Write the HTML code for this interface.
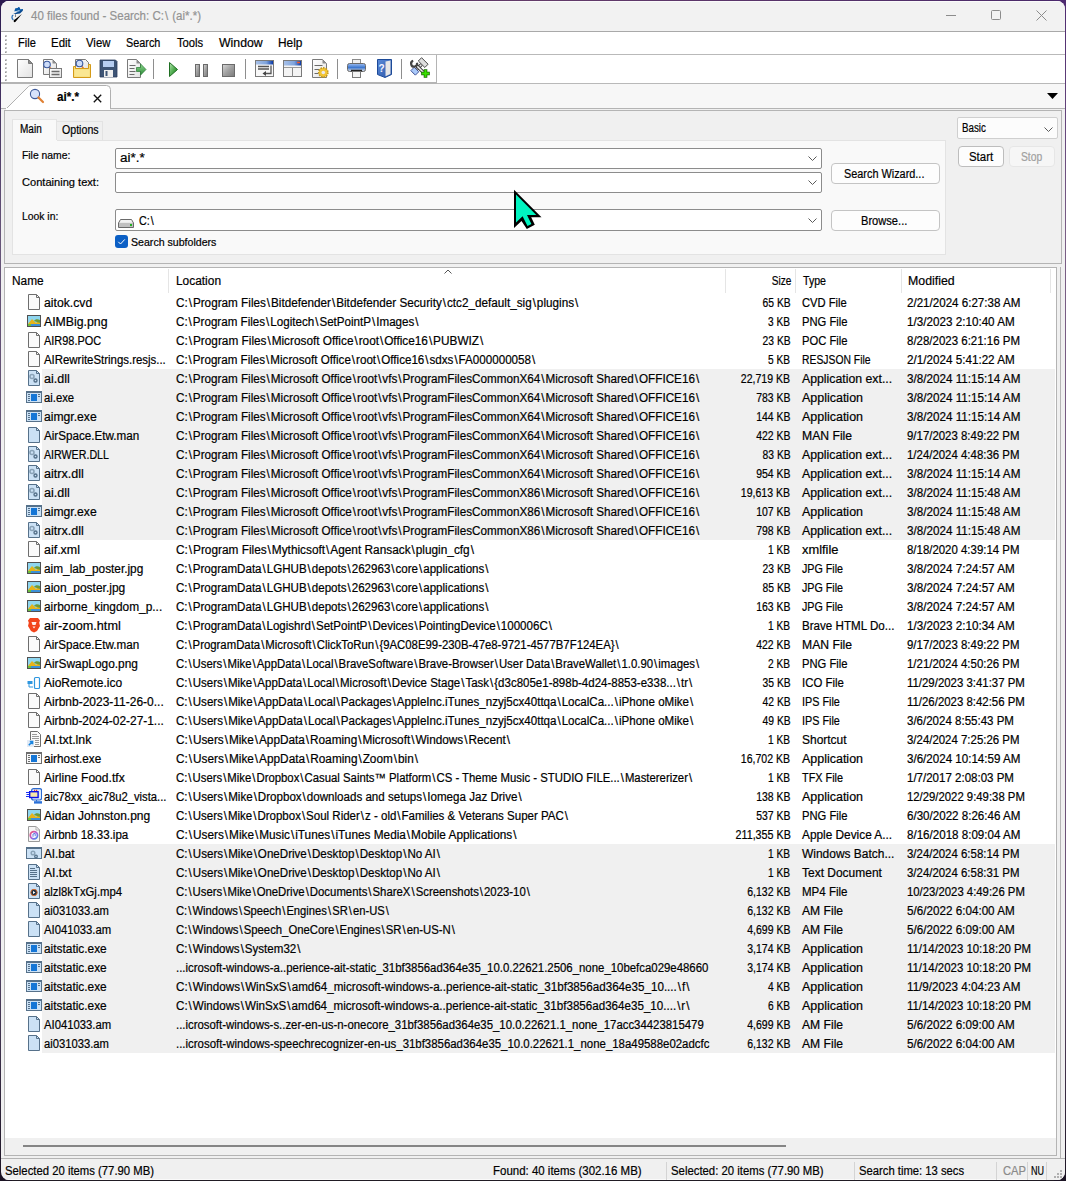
<!DOCTYPE html>
<html><head><meta charset="utf-8"><style>
*{box-sizing:border-box}
html,body{margin:0;padding:0}
body{width:1066px;height:1181px;overflow:hidden;position:relative;background:#6a577a;font-family:"Liberation Sans",sans-serif;font-size:12px;color:#000}
.a{position:absolute}
.t{position:absolute;white-space:nowrap;transform-origin:0 0;line-height:19px;-webkit-text-stroke:0.2px currentColor}
.tr{transform-origin:100% 0}
.t i{font-style:normal;display:inline-block;text-align:center}
#win{position:absolute;left:1px;top:1px;width:1064px;height:1179px;border-radius:8px;background:#f0f0f0;overflow:hidden}
.hl{position:absolute;height:1px;background:#b4b4b4}
.vl{position:absolute;width:1px;background:#b4b4b4}
.row{position:absolute;left:0;width:1056px;height:19px}
.sel{position:absolute;left:41px;width:1013px;height:19px;background:#f0f0f0}
.ic{position:absolute;left:25px;width:16px;height:16px}
.ic svg,.a>svg{display:block}
.btn{position:absolute;border:1px solid #c4c4c4;border-radius:4px;background:#fdfdfd;text-align:center;line-height:18px}
.inp{position:absolute;border:1px solid #8c8c8c;border-radius:2px;background:#fff}
.chev{position:absolute;width:12px;height:8px}
</style></head><body>
<div class="a" style="left:0;top:0;width:1066px;height:1px;background:linear-gradient(to right,#2b1a50,#643c6a 50%,#4a2a6a)"></div>
<div class="a" style="left:0;top:0;width:12px;height:12px;background:#2b1a50"></div>
<div class="a" style="left:1054px;top:0;width:12px;height:12px;background:#4e2a70"></div>
<div class="a" style="left:0;top:0;width:1px;height:1181px;background:linear-gradient(#2b1a50,#665478 20%,#554668 80%,#1c1424)"></div>
<div class="a" style="left:1065px;top:0;width:1px;height:1181px;background:linear-gradient(#4e2a70,#7a5e85 20%,#6a5075 80%,#1c1424)"></div>
<div class="a" style="left:0;top:1180px;width:1066px;height:1px;background:#211c24"></div>
<div class="a" style="left:0;top:1169px;width:12px;height:12px;background:#1c1424"></div>
<div class="a" style="left:1054px;top:1169px;width:12px;height:12px;background:#1c1424"></div>
<div id="win">

<div class="a" style="left:0;top:0;width:1064px;height:30px;background:#f2f2f2;border-top:1px solid #fbfbfb"></div>
<div class="hl" style="left:0;top:30px;width:1064px;background:#a9a9a9"></div>
<svg class="a" style="left:5px;top:3px" width="24" height="24" viewBox="0 0 24 24">
<path d="M8.3 7.2L9.3 4.3L11.6 3.9L12.4 2.9L13.8 3.4L14.2 5.2L16.9 5.1L17 6.3L14.3 7.6L11 8.2Z" fill="#0a5aa6"/>
<path d="M7.2 9.8L10.5 8.6L14.2 7.1L16.8 5.6L16.6 7.1L14 9.6L10.3 10Z" fill="#0a4a90"/>
<path d="M8.8 7.9L13.5 6.6" stroke="#fff" stroke-width=".8"/>
<path d="M7.3 11C5.6 11.8 5.4 14.6 7.4 15.9" fill="none" stroke="#2a70b8" stroke-width="1.3"/>
<path d="M9.5 10.2V13" stroke="#555" stroke-width=".7"/>
<path d="M7.7 17.6C7.4 16.2 8.3 15.5 9.6 14.9L15.9 10.1L10.2 17C9.7 18.3 8.3 18.5 7.7 17.6Z" fill="#000"/>
</svg>
<div class="t" style="top:6px;transform:scaleX(0.9578);color:#939393;left:30.00px;">40 files found - Search: C:<i style="width:5.41px">\</i> (ai*.*)</div>
<div class="a" style="left:945px;top:14px;width:10px;height:1px;background:#8c8c8c"></div>
<div class="a" style="left:990px;top:9px;width:10px;height:10px;border:1px solid #8c8c8c;border-radius:1.5px"></div>
<svg class="a" style="left:1035px;top:9px" width="11" height="11"><path d="M.5 .5l10 10M10.5 .5l-10 10" stroke="#8c8c8c" stroke-width="1"/></svg>
<div class="a" style="left:0;top:31px;width:1064px;height:22px;background:#fff"></div>
<div class="hl" style="left:0;top:53px;width:1064px;background:#b9b9b9"></div>
<div class="a" style="left:4px;top:34px;width:2px;height:2px;background:#c4c4c4"></div><div class="a" style="left:4px;top:35px;width:1px;height:1px;background:#9a9a9a"></div>
<div class="a" style="left:4px;top:38px;width:2px;height:2px;background:#c4c4c4"></div><div class="a" style="left:4px;top:39px;width:1px;height:1px;background:#9a9a9a"></div>
<div class="a" style="left:4px;top:42px;width:2px;height:2px;background:#c4c4c4"></div><div class="a" style="left:4px;top:43px;width:1px;height:1px;background:#9a9a9a"></div>
<div class="a" style="left:4px;top:46px;width:2px;height:2px;background:#c4c4c4"></div><div class="a" style="left:4px;top:47px;width:1px;height:1px;background:#9a9a9a"></div>
<div class="a" style="left:4px;top:50px;width:2px;height:2px;background:#c4c4c4"></div><div class="a" style="left:4px;top:51px;width:1px;height:1px;background:#9a9a9a"></div>
<div class="t" style="top:33px;transform:scaleX(0.9206);left:17.20px;">File</div>
<div class="t" style="top:33px;transform:scaleX(0.9527);left:50.20px;">Edit</div>
<div class="t" style="top:33px;transform:scaleX(0.9460);left:85.30px;">View</div>
<div class="t" style="top:33px;transform:scaleX(0.9047);left:125.20px;">Search</div>
<div class="t" style="top:33px;transform:scaleX(0.9353);left:175.70px;">Tools</div>
<div class="t" style="top:33px;transform:scaleX(1.0239);left:217.90px;">Window</div>
<div class="t" style="top:33px;transform:scaleX(0.9887);left:277.30px;">Help</div>
<div class="a" style="left:0;top:54px;width:1064px;height:28px;background:#fff"></div>
<div class="a" style="left:0;top:81px;width:436px;height:2px;background:#b4b4b4"></div>
<div class="hl" style="left:436px;top:82px;width:628px;background:#b9b9b9"></div>
<div class="vl" style="left:435px;top:54px;height:28px;background:#b4b4b4"></div>
<div class="a" style="left:4px;top:58px;width:2px;height:2px;background:#c4c4c4"></div><div class="a" style="left:4px;top:59px;width:1px;height:1px;background:#9a9a9a"></div>
<div class="a" style="left:4px;top:62px;width:2px;height:2px;background:#c4c4c4"></div><div class="a" style="left:4px;top:63px;width:1px;height:1px;background:#9a9a9a"></div>
<div class="a" style="left:4px;top:66px;width:2px;height:2px;background:#c4c4c4"></div><div class="a" style="left:4px;top:67px;width:1px;height:1px;background:#9a9a9a"></div>
<div class="a" style="left:4px;top:70px;width:2px;height:2px;background:#c4c4c4"></div><div class="a" style="left:4px;top:71px;width:1px;height:1px;background:#9a9a9a"></div>
<div class="a" style="left:4px;top:74px;width:2px;height:2px;background:#c4c4c4"></div><div class="a" style="left:4px;top:75px;width:1px;height:1px;background:#9a9a9a"></div>
<div class="a" style="left:4px;top:78px;width:2px;height:2px;background:#c4c4c4"></div><div class="a" style="left:4px;top:79px;width:1px;height:1px;background:#9a9a9a"></div>
<div class="vl" style="left:152px;top:58px;height:20px;background:#8a8a8a"></div>
<div class="vl" style="left:244px;top:58px;height:20px;background:#8a8a8a"></div>
<div class="vl" style="left:336px;top:58px;height:20px;background:#8a8a8a"></div>
<div class="vl" style="left:400px;top:58px;height:20px;background:#8a8a8a"></div>
<svg class="a" style="left:-1px;top:-1px" width="440" height="84" viewBox="0 0 440 84">
<defs>
<linearGradient id="gdoc" x1="0" y1="0" x2="1" y2="1"><stop offset="0" stop-color="#ffffff"/><stop offset="1" stop-color="#e2e2e2"/></linearGradient>
<linearGradient id="ggreen" x1="0" y1="0" x2="1" y2="1"><stop offset="0" stop-color="#b6e8b0"/><stop offset=".55" stop-color="#4aa84a"/><stop offset="1" stop-color="#1f7a22"/></linearGradient>
<linearGradient id="ggray" x1="0" y1="0" x2="1" y2="1"><stop offset="0" stop-color="#d8d8d8"/><stop offset=".5" stop-color="#a0a0a0"/><stop offset="1" stop-color="#7a7a7a"/></linearGradient>
<linearGradient id="gblue" x1="0" y1="0" x2="1" y2="0"><stop offset="0" stop-color="#a7c0e8"/><stop offset=".6" stop-color="#7fa4dc"/><stop offset="1" stop-color="#0a3aa8"/></linearGradient>
<linearGradient id="garrow" x1="0" y1="0" x2="0" y2="1"><stop offset="0" stop-color="#8fd88f"/><stop offset="1" stop-color="#2a8a35"/></linearGradient>
<linearGradient id="gprint" x1="0" y1="0" x2="0" y2="1"><stop offset="0" stop-color="#9dbdf0"/><stop offset=".5" stop-color="#3e78d0"/><stop offset="1" stop-color="#e8e8e8"/></linearGradient>
<linearGradient id="gbook" x1="0" y1="0" x2="1" y2="1"><stop offset="0" stop-color="#5a8ad8"/><stop offset="1" stop-color="#2a55a8"/></linearGradient>
</defs>
<!-- new doc -->
<path d="M17.5 59.5H28.5L32.5 63.5V77.5H17.5Z" fill="url(#gdoc)" stroke="#7a7a7a"/>
<path d="M28.5 59.5V63.5H32.5Z" fill="#8c8c8c" stroke="#7a7a7a"/>
<!-- doc search -->
<path d="M43.5 59.5H52.5L56.5 63.5V74.5H43.5Z" fill="url(#gdoc)" stroke="#7a7a7a"/>
<path d="M52.5 59.5V63.5H56.5Z" fill="#8c8c8c"/>
<path d="M48.5 66.5L52 70" stroke="#e07a2a" stroke-width="1.8"/>
<circle cx="47" cy="64.5" r="3.3" fill="#cddcf8" stroke="#3a5aa0" stroke-width="1.1"/>
<rect x="49.5" y="68.5" width="12" height="9" fill="url(#gdoc)" stroke="#7a7a7a"/>
<path d="M51.5 71.5h8M51.5 74.5h8" stroke="#6a6a6a" stroke-width="1.3"/>
<!-- folder search -->
<path d="M75.5 59.5H85.5L88.5 62.5V70H75.5Z" fill="url(#gdoc)" stroke="#7a7a7a"/>
<path d="M80 65L83.5 68" stroke="#e07a2a" stroke-width="1.6"/>
<circle cx="79.5" cy="63.5" r="3.3" fill="#cddcf8" stroke="#3a5aa0" stroke-width="1.1"/>
<path d="M73.5 66.5H75.5V68.5H88.5V64.5H90.5V77.5H73.5Z" fill="#f6dc78" stroke="#d49a18"/>
<path d="M74.5 69.5H89.5V76.5H74.5Z" fill="#fae792"/>
<!-- floppy -->
<path d="M100 60H115.5L117 61.5V77H100Z" fill="#3d5475" stroke="#2c3e5e" stroke-width=".8"/>
<rect x="103" y="61" width="11" height="6" fill="#b6cdf0"/>
<rect x="104" y="70" width="9" height="7" fill="#f0f0f0"/>
<rect x="105.5" y="71" width="2" height="5" fill="#3d5475"/>
<!-- export -->
<path d="M127.5 59.5H136.5L140.5 63.5V77.5H127.5Z" fill="url(#gdoc)" stroke="#7a7a7a"/>
<path d="M136.5 59.5V63.5H140.5Z" fill="#8c8c8c"/>
<path d="M129.5 65.5h6M129.5 68.5h5M129.5 71.5h6M129.5 74.5h5" stroke="#6a6a6a" stroke-width="1.2"/>
<path d="M136.5 67.5H140.5V63.8L146 69.5L140.5 75.2V71.5H136.5Z" fill="url(#garrow)" stroke="#2a7a35" stroke-width=".7"/>
<!-- separators -->
<path d="M153.5 59v20M245.5 59v20M337.5 59v20M401.5 59v20" stroke="#8e8e8e"/>
<!-- play -->
<path d="M169.5 62.5L177.5 69.5L169.5 76.5Z" fill="url(#ggreen)" stroke="#1f6e22" stroke-linejoin="round"/>
<!-- pause -->
<rect x="195.5" y="64.5" width="4" height="12" fill="url(#ggray)" stroke="#6a6a6a"/>
<rect x="203.5" y="64.5" width="4" height="12" fill="url(#ggray)" stroke="#6a6a6a"/>
<!-- stop -->
<rect x="222.5" y="64.5" width="12" height="12" fill="url(#ggray)" stroke="#6a6a6a"/>
<!-- window arrow -->
<rect x="255.5" y="60.5" width="18" height="16" fill="#f8f8f8" stroke="#7a7a7a"/>
<rect x="256" y="61" width="17" height="3.5" fill="url(#gblue)"/>
<path d="M258 66.5h11M258 69h11" stroke="#555" stroke-width="1.3"/>
<path d="M271 65.5V73.5H265" fill="none" stroke="#555" stroke-width="1.3"/>
<path d="M262.5 73.5L266 71V76Z" fill="#444"/>
<!-- window panes -->
<rect x="283.5" y="60.5" width="18" height="16" fill="#f4f4f4" stroke="#7a7a7a"/>
<rect x="284" y="61" width="17" height="4.5" fill="url(#gblue)"/>
<path d="M297 62.5h3" stroke="#f05a28" stroke-width="1.4"/>
<path d="M284 67.5h17" stroke="#9a9a9a"/>
<path d="M292.5 68v9" stroke="#8a8a8a"/>
<!-- doc gear -->
<path d="M312.5 59.5H322.5L326.5 63.5V77.5H312.5Z" fill="url(#gdoc)" stroke="#7a7a7a"/>
<path d="M322.5 59.5V63.5H326.5Z" fill="#8c8c8c"/>
<path d="M314.5 65.5h8M314.5 69.5h5M314.5 73.5h4" stroke="#6a6a6a" stroke-width="1.2"/>
<circle cx="323.3" cy="72.5" r="4.6" fill="#f2c535" stroke="#c89a18" stroke-width="1.6" stroke-dasharray="1.6 1"/>
<circle cx="323.3" cy="72.5" r="3.6" fill="#f2c535"/>
<circle cx="323.3" cy="72.5" r="1.8" fill="#e8e8f0"/>
<!-- printer -->
<rect x="352.5" y="59.5" width="8" height="5" fill="#f0f0f0" stroke="#8a8a8a"/>
<rect x="347.5" y="63.5" width="18" height="8" rx="2" fill="url(#gprint)" stroke="#6a6a6a"/>
<path d="M351 70.5h11" stroke="#222" stroke-width="1.4"/>
<rect x="352.5" y="71.5" width="8" height="6" fill="#f4f4f4" stroke="#7a7a7a"/>
<!-- help book -->
<path d="M377.5 59.5H391.5V74.5L385 77.5L377.5 74.5Z" fill="url(#gbook)" stroke="#1c4a98"/>
<path d="M385.5 61.5L390.5 60.5V74L385.5 76.3Z" fill="#e6e6e6"/>
<text x="378.6" y="72" font-family="Liberation Sans" font-weight="bold" font-size="10" fill="#f4f4ff">?</text>
<!-- tools -->
<path d="M421.5 64.5L413 73" stroke="#333" stroke-width="3.2"/>
<path d="M421.5 64.5L413 73" stroke="#e8e8e8" stroke-width="1.6"/>
<path d="M421.57 57.72 L428.08 64.23 L424.83 67.48 L418.32 60.97Z" fill="#dedede" stroke="#333" stroke-width=".9"/>
<path d="M414.23 67.24 L418.76 71.77 L415.37 75.16 L410.84 70.63Z" fill="#a9c9fa" stroke="#3a4a90" stroke-width=".9"/>
<path d="M416 65L423 72" stroke="#333" stroke-width="3.2"/>
<path d="M416 65L423 72" stroke="#f2f2f2" stroke-width="1.6"/>
<path d="M417 62.8A3 3 0 1 1 413.2 60.8" fill="none" stroke="#444" stroke-width="2.2"/>
<path d="M425.5 69.2v8.6M421.2 73.5h8.6" stroke="#176a00" stroke-width="3.6"/>
<path d="M425.5 70v7M422 73.5h7" stroke="#3ae000" stroke-width="2"/>
</svg>
<div class="a" style="left:0;top:83px;width:1064px;height:24px;background:#f7f7f7"></div>
<div class="hl" style="left:0;top:107px;width:1064px;background:#b4b4b4"></div>
<svg class="a" style="left:0;top:83px" width="115" height="26"><path d="M5 25 L27.5 2.5 Q28.5 1.5 30 1.5 H105.5 Q109.5 1.5 109.5 5.5 V25" fill="#ffffff" stroke="#b0b0b0"/><rect x="5" y="24" width="104" height="2" fill="#fff"/></svg>
<svg class="a" style="left:28px;top:87px" width="16" height="16"><circle cx="6" cy="6" r="4.6" fill="#d7e2fb" stroke="#3e5a9a" stroke-width="1.1"/><path d="M9.5 9.5l4.5 4.5" stroke="#e08033" stroke-width="2.2" stroke-linecap="round"/></svg>
<div class="t" style="top:87px;transform:scaleX(0.9699);font-weight:bold;left:56.00px;">ai*.*</div>
<svg class="a" style="left:92px;top:93px" width="9" height="9"><path d="M.8 .8l7.4 7.4M8.2 .8l-7.4 7.4" stroke="#111" stroke-width="1.35"/></svg>
<svg class="a" style="left:1046px;top:92px" width="11" height="6"><path d="M0 0h11L5.5 6z" fill="#000"/></svg>
<div class="a" style="left:3px;top:109px;width:1058px;height:154px;border:1px solid #b4b4b4;border-top-width:1px;background:#f0f0f0"></div>
<div class="a" style="left:11px;top:118px;width:45px;height:22px;border:1px solid #e3e3e3;border-bottom:none;background:#f9f9f9"></div>
<div class="a" style="left:56px;top:120px;width:46px;height:20px;border:1px solid #e3e3e3;border-bottom:none;border-left:none;background:#f0f0f0"></div>
<div class="t" style="top:119px;transform:scaleX(0.8343);left:18.50px;">Main</div>
<div class="t" style="top:120px;transform:scaleX(0.8850);left:60.60px;">Options</div>
<div class="a" style="left:11px;top:139px;width:934px;height:115px;border:1px solid #e3e3e3;background:#f9f9f9"></div>
<div class="a" style="left:12px;top:139px;width:44px;height:2px;background:#f9f9f9"></div>
<div class="t" style="top:145px;transform:scaleX(0.9406);font-size:11px;left:20.60px;">File name:</div>
<div class="t" style="top:172px;transform:scaleX(1.0074);font-size:11px;left:20.60px;">Containing text:</div>
<div class="t" style="top:206px;transform:scaleX(0.9422);font-size:11px;left:20.50px;">Look in:</div>
<div class="inp" style="left:114px;top:147px;width:707px;height:21px"></div>
<div class="a" style="left:807px;top:155px"><svg width="10" height="6"><path d="M.5 .5L4.5 4.5L8.5 .5" fill="none" stroke="#5a5a5a" stroke-width="1"/></svg></div>
<div class="inp" style="left:114px;top:171px;width:707px;height:21px"></div>
<div class="a" style="left:807px;top:179px"><svg width="10" height="6"><path d="M.5 .5L4.5 4.5L8.5 .5" fill="none" stroke="#5a5a5a" stroke-width="1"/></svg></div>
<div class="inp" style="left:114px;top:208px;width:707px;height:22px"></div>
<div class="a" style="left:807px;top:217px"><svg width="10" height="6"><path d="M.5 .5L4.5 4.5L8.5 .5" fill="none" stroke="#5a5a5a" stroke-width="1"/></svg></div>
<div class="t" style="top:148px;transform:scaleX(1.1220);left:119.40px;">ai*.*</div>
<svg class="a" style="left:117px;top:217px" width="17" height="11"><path d="M2.5 1.5h11l2 3.5v4.5h-15V5z" fill="#cfcfcf" stroke="#6a6a6a"/><path d="M3 2h10l1.6 2.8H1.4z" fill="#f2f2f2"/><rect x="1" y="5" width="14" height="4" fill="#c0c0c0"/><rect x="12" y="6" width="2" height="2" fill="#22b022"/></svg>
<div class="t" style="top:211px;transform:scaleX(0.8929);left:137.50px;">C:<i style="width:5.81px">\</i></div>
<div class="a" style="left:114px;top:234px;width:13px;height:13px;border-radius:3px;background:#0b5fc5"></div>
<svg class="a" style="left:114px;top:234px" width="13" height="13"><path d="M3.3 6.8l2.2 2.2 4.3-4.6" fill="none" stroke="#fff" stroke-width="1"/></svg>
<div class="t" style="top:232px;transform:scaleX(0.9633);font-size:11px;left:129.60px;">Search subfolders</div>
<div class="btn" style="left:830px;top:162px;width:109px;height:21px;"></div>
<div class="t" style="top:164px;transform:scaleX(0.9065);left:843.40px;">Search Wizard...</div>
<div class="btn" style="left:830px;top:209px;width:109px;height:21px;"></div>
<div class="t" style="top:211px;transform:scaleX(0.9257);left:860.30px;">Browse...</div>
<div class="a" style="left:956px;top:116px;width:101px;height:22px;border:1px solid #cfcfcf;border-radius:2px;background:#fcfcfc"></div>
<div class="t" style="top:118px;transform:scaleX(0.8145);left:960.60px;">Basic</div>
<div class="a" style="left:1042.5px;top:125.5px"><svg width="10" height="6"><path d="M.5 .5L4.5 4.5L8.5 .5" fill="none" stroke="#5a5a5a" stroke-width="1"/></svg></div>
<div class="btn" style="left:957px;top:145px;width:46px;height:21px;border-color:#bdbdbd"></div>
<div class="t" style="top:147px;transform:scaleX(0.9509);left:967.70px;">Start</div>
<div class="btn" style="left:1008px;top:145px;width:46px;height:21px;border-color:#e6e6e6;background:#f6f6f6"></div>
<div class="t" style="top:147px;transform:scaleX(0.8588);color:#a0a0a0;left:1019.70px;">Stop</div>
<div class="a" style="left:3px;top:266px;width:1053px;height:889px;border:1px solid #b4b4b4;background:#fff"></div>
<div class="vl" style="left:1059px;top:266px;height:892px;background:#b4b4b4"></div>
<div class="vl" style="left:167px;top:268px;height:24px;background:#e5e5e5"></div>
<div class="vl" style="left:724px;top:268px;height:24px;background:#e5e5e5"></div>
<div class="vl" style="left:794px;top:268px;height:24px;background:#e5e5e5"></div>
<div class="vl" style="left:900px;top:268px;height:24px;background:#e5e5e5"></div>
<div class="vl" style="left:1049px;top:268px;height:24px;background:#e5e5e5"></div>
<svg class="a" style="left:443px;top:268px" width="9" height="6"><path d="M.5 4.5L4 1l3.5 3.5" fill="none" stroke="#555" stroke-width="1"/></svg>
<div class="t" style="top:271px;transform:scaleX(0.9872);left:11.40px;">Name</div>
<div class="t" style="top:271px;transform:scaleX(0.9919);left:174.50px;">Location</div>
<div class="t" style="top:271px;transform:scaleX(0.8396);right:274.02px;transform-origin:100% 0;">Size</div>
<div class="t" style="top:271px;transform:scaleX(0.8841);left:802.00px;">Type</div>
<div class="t" style="top:271px;transform:scaleX(1.0274);left:906.80px;">Modified</div>
<div class="ic" style="top:293px"><svg width="16" height="16"><path d="M2.5 .5h8l3 3v12h-11z" fill="#fafafa" stroke="#6e6e6e"/><path d="M10.5 .5v3h3" fill="none" stroke="#6e6e6e"/></svg></div>
<div class="t" style="top:293px;transform:scaleX(1.0179);left:43.20px;">aitok.cvd</div>
<div class="t" style="top:293px;transform:scaleX(0.9770);left:174.50px;">C:<i style="width:5.31px">\</i>Program Files<i style="width:5.31px">\</i>Bitdefender<i style="width:5.31px">\</i>Bitdefender Security<i style="width:5.31px">\</i>ctc2_default_sig<i style="width:5.31px">\</i>plugins<i style="width:5.31px">\</i></div>
<div class="t" style="top:293px;transform:scaleX(0.8596);right:274.50px;transform-origin:100% 0;">65 KB</div>
<div class="t" style="top:293px;transform:scaleX(0.9316);left:801.40px;">CVD File</div>
<div class="t" style="top:293px;transform:scaleX(0.9655);left:906.30px;">2/21/2024 6:27:38 AM</div>
<div class="ic" style="top:312px"><svg width="16" height="16"><rect x="1.5" y="2.5" width="13" height="11" fill="#8fd6ef" stroke="#505050"/><path d="M2 11l4-5 4 4 2-2 2 2v3H2z" fill="#e7b319"/><path d="M8 8c1-2 4-2 6-1v3z" fill="#6f9a35"/><rect x="2" y="11" width="12" height="2" fill="#3c90d8"/><rect x="2" y="11" width="3" height="2" fill="#6bc23d"/></svg></div>
<div class="t" style="top:312px;transform:scaleX(1.0243);left:43.20px;">AIMBig.png</div>
<div class="t" style="top:312px;transform:scaleX(0.9680);left:174.50px;">C:<i style="width:5.36px">\</i>Program Files<i style="width:5.36px">\</i>Logitech<i style="width:5.36px">\</i>SetPointP<i style="width:5.36px">\</i>Images<i style="width:5.36px">\</i></div>
<div class="t" style="top:312px;transform:scaleX(0.8456);right:274.50px;transform-origin:100% 0;">3 KB</div>
<div class="t" style="top:312px;transform:scaleX(0.9348);left:801.40px;">PNG File</div>
<div class="t" style="top:312px;transform:scaleX(0.9726);left:906.30px;">1/3/2023 2:10:40 AM</div>
<div class="ic" style="top:331px"><svg width="16" height="16"><path d="M2.5 .5h8l3 3v12h-11z" fill="#fafafa" stroke="#6e6e6e"/><path d="M10.5 .5v3h3" fill="none" stroke="#6e6e6e"/></svg></div>
<div class="t" style="top:331px;transform:scaleX(0.9115);left:43.20px;">AIR98.POC</div>
<div class="t" style="top:331px;transform:scaleX(0.9839);left:174.50px;">C:<i style="width:5.27px">\</i>Program Files<i style="width:5.27px">\</i>Microsoft Office<i style="width:5.27px">\</i>root<i style="width:5.27px">\</i>Office16<i style="width:5.27px">\</i>PUBWIZ<i style="width:5.27px">\</i></div>
<div class="t" style="top:331px;transform:scaleX(0.8596);right:274.50px;transform-origin:100% 0;">23 KB</div>
<div class="t" style="top:331px;transform:scaleX(0.9348);left:801.40px;">POC File</div>
<div class="t" style="top:331px;transform:scaleX(0.9564);left:906.30px;">8/28/2023 6:21:16 PM</div>
<div class="ic" style="top:350px"><svg width="16" height="16"><path d="M2.5 .5h8l3 3v12h-11z" fill="#fafafa" stroke="#6e6e6e"/><path d="M10.5 .5v3h3" fill="none" stroke="#6e6e6e"/></svg></div>
<div class="t" style="top:350px;transform:scaleX(0.9510);left:43.20px;">AIRewriteStrings.resjs...</div>
<div class="t" style="top:350px;transform:scaleX(0.9687);left:174.50px;">C:<i style="width:5.35px">\</i>Program Files<i style="width:5.35px">\</i>Microsoft Office<i style="width:5.35px">\</i>root<i style="width:5.35px">\</i>Office16<i style="width:5.35px">\</i>sdxs<i style="width:5.35px">\</i>FA000000058<i style="width:5.35px">\</i></div>
<div class="t" style="top:350px;transform:scaleX(0.8456);right:274.50px;transform-origin:100% 0;">5 KB</div>
<div class="t" style="top:350px;transform:scaleX(0.8633);left:801.40px;">RESJSON File</div>
<div class="t" style="top:350px;transform:scaleX(0.9726);left:906.30px;">2/1/2024 5:41:22 AM</div>
<div class="sel" style="top:368px"></div>
<div class="ic" style="top:369px"><svg width="16" height="16"><path d="M2.5 .5h8l3 3v12h-11z" fill="#cbe1f5" stroke="#56718a"/><path d="M10.5 .5v3h3" fill="none" stroke="#56718a"/><circle cx="6" cy="6.5" r="2" fill="none" stroke="#8aa3b8" stroke-width="1.6"/><circle cx="9.5" cy="10.5" r="1.5" fill="none" stroke="#56718a" stroke-width="1.4"/></svg></div>
<div class="t" style="top:369px;transform:scaleX(1.0438);left:43.20px;">ai.dll</div>
<div class="t" style="top:369px;transform:scaleX(0.9745);left:174.50px;">C:<i style="width:5.32px">\</i>Program Files<i style="width:5.32px">\</i>Microsoft Office<i style="width:5.32px">\</i>root<i style="width:5.32px">\</i>vfs<i style="width:5.32px">\</i>ProgramFilesCommonX64<i style="width:5.32px">\</i>Microsoft Shared<i style="width:5.32px">\</i>OFFICE16<i style="width:5.32px">\</i></div>
<div class="t" style="top:369px;transform:scaleX(0.8779);right:274.50px;transform-origin:100% 0;">22,719 KB</div>
<div class="t" style="top:369px;transform:scaleX(1.0235);left:801.40px;">Application ext...</div>
<div class="t" style="top:369px;transform:scaleX(0.9729);left:906.30px;">3/8/2024 11:15:14 AM</div>
<div class="sel" style="top:387px"></div>
<div class="ic" style="top:388px"><svg width="16" height="16"><rect x=".5" y="2.5" width="15" height="11" fill="#cbe1f5" stroke="#56718a"/><rect x="1" y="2" width="14" height="2" fill="#56718a"/><rect x="5" y="5" width="6" height="7" fill="#1576d6"/><path d="M2 5.5h2M2 7.5h2M2 9.5h2M2 11.5h2M12 5.5h2M12 7.5h2" stroke="#56718a"/></svg></div>
<div class="t" style="top:388px;transform:scaleX(0.9413);left:43.20px;">ai.exe</div>
<div class="t" style="top:388px;transform:scaleX(0.9745);left:174.50px;">C:<i style="width:5.32px">\</i>Program Files<i style="width:5.32px">\</i>Microsoft Office<i style="width:5.32px">\</i>root<i style="width:5.32px">\</i>vfs<i style="width:5.32px">\</i>ProgramFilesCommonX64<i style="width:5.32px">\</i>Microsoft Shared<i style="width:5.32px">\</i>OFFICE16<i style="width:5.32px">\</i></div>
<div class="t" style="top:388px;transform:scaleX(0.8688);right:274.50px;transform-origin:100% 0;">783 KB</div>
<div class="t" style="top:388px;transform:scaleX(1.0391);left:801.40px;">Application</div>
<div class="t" style="top:388px;transform:scaleX(0.9729);left:906.30px;">3/8/2024 11:15:14 AM</div>
<div class="sel" style="top:406px"></div>
<div class="ic" style="top:407px"><svg width="16" height="16"><rect x=".5" y="2.5" width="15" height="11" fill="#cbe1f5" stroke="#56718a"/><rect x="1" y="2" width="14" height="2" fill="#56718a"/><rect x="5" y="5" width="6" height="7" fill="#1576d6"/><path d="M2 5.5h2M2 7.5h2M2 9.5h2M2 11.5h2M12 5.5h2M12 7.5h2" stroke="#56718a"/></svg></div>
<div class="t" style="top:407px;transform:scaleX(1.0130);left:43.20px;">aimgr.exe</div>
<div class="t" style="top:407px;transform:scaleX(0.9745);left:174.50px;">C:<i style="width:5.32px">\</i>Program Files<i style="width:5.32px">\</i>Microsoft Office<i style="width:5.32px">\</i>root<i style="width:5.32px">\</i>vfs<i style="width:5.32px">\</i>ProgramFilesCommonX64<i style="width:5.32px">\</i>Microsoft Shared<i style="width:5.32px">\</i>OFFICE16<i style="width:5.32px">\</i></div>
<div class="t" style="top:407px;transform:scaleX(0.8688);right:274.50px;transform-origin:100% 0;">144 KB</div>
<div class="t" style="top:407px;transform:scaleX(1.0391);left:801.40px;">Application</div>
<div class="t" style="top:407px;transform:scaleX(0.9729);left:906.30px;">3/8/2024 11:15:14 AM</div>
<div class="sel" style="top:425px"></div>
<div class="ic" style="top:426px"><svg width="16" height="16"><path d="M2.5 .5h8l3 3v12h-11z" fill="#cbe1f5" stroke="#56718a"/><path d="M10.5 .5v3h3" fill="none" stroke="#56718a"/></svg></div>
<div class="t" style="top:426px;transform:scaleX(0.9716);left:43.20px;">AirSpace.Etw.man</div>
<div class="t" style="top:426px;transform:scaleX(0.9745);left:174.50px;">C:<i style="width:5.32px">\</i>Program Files<i style="width:5.32px">\</i>Microsoft Office<i style="width:5.32px">\</i>root<i style="width:5.32px">\</i>vfs<i style="width:5.32px">\</i>ProgramFilesCommonX64<i style="width:5.32px">\</i>Microsoft Shared<i style="width:5.32px">\</i>OFFICE16<i style="width:5.32px">\</i></div>
<div class="t" style="top:426px;transform:scaleX(0.8688);right:274.50px;transform-origin:100% 0;">422 KB</div>
<div class="t" style="top:426px;transform:scaleX(1.0147);left:801.40px;">MAN File</div>
<div class="t" style="top:426px;transform:scaleX(0.9522);left:906.30px;">9/17/2023 8:49:22 PM</div>
<div class="sel" style="top:444px"></div>
<div class="ic" style="top:445px"><svg width="16" height="16"><path d="M2.5 .5h8l3 3v12h-11z" fill="#cbe1f5" stroke="#56718a"/><path d="M10.5 .5v3h3" fill="none" stroke="#56718a"/><circle cx="6" cy="6.5" r="2" fill="none" stroke="#8aa3b8" stroke-width="1.6"/><circle cx="9.5" cy="10.5" r="1.5" fill="none" stroke="#56718a" stroke-width="1.4"/></svg></div>
<div class="t" style="top:445px;transform:scaleX(0.8877);left:43.20px;">AIRWER.DLL</div>
<div class="t" style="top:445px;transform:scaleX(0.9745);left:174.50px;">C:<i style="width:5.32px">\</i>Program Files<i style="width:5.32px">\</i>Microsoft Office<i style="width:5.32px">\</i>root<i style="width:5.32px">\</i>vfs<i style="width:5.32px">\</i>ProgramFilesCommonX64<i style="width:5.32px">\</i>Microsoft Shared<i style="width:5.32px">\</i>OFFICE16<i style="width:5.32px">\</i></div>
<div class="t" style="top:445px;transform:scaleX(0.8596);right:274.50px;transform-origin:100% 0;">83 KB</div>
<div class="t" style="top:445px;transform:scaleX(1.0235);left:801.40px;">Application ext...</div>
<div class="t" style="top:445px;transform:scaleX(0.9522);left:906.30px;">1/24/2024 4:48:36 PM</div>
<div class="sel" style="top:463px"></div>
<div class="ic" style="top:464px"><svg width="16" height="16"><path d="M2.5 .5h8l3 3v12h-11z" fill="#cbe1f5" stroke="#56718a"/><path d="M10.5 .5v3h3" fill="none" stroke="#56718a"/><circle cx="6" cy="6.5" r="2" fill="none" stroke="#8aa3b8" stroke-width="1.6"/><circle cx="9.5" cy="10.5" r="1.5" fill="none" stroke="#56718a" stroke-width="1.4"/></svg></div>
<div class="t" style="top:464px;transform:scaleX(1.0461);left:43.20px;">aitrx.dll</div>
<div class="t" style="top:464px;transform:scaleX(0.9745);left:174.50px;">C:<i style="width:5.32px">\</i>Program Files<i style="width:5.32px">\</i>Microsoft Office<i style="width:5.32px">\</i>root<i style="width:5.32px">\</i>vfs<i style="width:5.32px">\</i>ProgramFilesCommonX64<i style="width:5.32px">\</i>Microsoft Shared<i style="width:5.32px">\</i>OFFICE16<i style="width:5.32px">\</i></div>
<div class="t" style="top:464px;transform:scaleX(0.8688);right:274.50px;transform-origin:100% 0;">954 KB</div>
<div class="t" style="top:464px;transform:scaleX(1.0235);left:801.40px;">Application ext...</div>
<div class="t" style="top:464px;transform:scaleX(0.9729);left:906.30px;">3/8/2024 11:15:14 AM</div>
<div class="sel" style="top:482px"></div>
<div class="ic" style="top:483px"><svg width="16" height="16"><path d="M2.5 .5h8l3 3v12h-11z" fill="#cbe1f5" stroke="#56718a"/><path d="M10.5 .5v3h3" fill="none" stroke="#56718a"/><circle cx="6" cy="6.5" r="2" fill="none" stroke="#8aa3b8" stroke-width="1.6"/><circle cx="9.5" cy="10.5" r="1.5" fill="none" stroke="#56718a" stroke-width="1.4"/></svg></div>
<div class="t" style="top:483px;transform:scaleX(1.0438);left:43.20px;">ai.dll</div>
<div class="t" style="top:483px;transform:scaleX(0.9745);left:174.50px;">C:<i style="width:5.32px">\</i>Program Files<i style="width:5.32px">\</i>Microsoft Office<i style="width:5.32px">\</i>root<i style="width:5.32px">\</i>vfs<i style="width:5.32px">\</i>ProgramFilesCommonX86<i style="width:5.32px">\</i>Microsoft Shared<i style="width:5.32px">\</i>OFFICE16<i style="width:5.32px">\</i></div>
<div class="t" style="top:483px;transform:scaleX(0.8779);right:274.50px;transform-origin:100% 0;">19,613 KB</div>
<div class="t" style="top:483px;transform:scaleX(1.0235);left:801.40px;">Application ext...</div>
<div class="t" style="top:483px;transform:scaleX(0.9729);left:906.30px;">3/8/2024 11:15:48 AM</div>
<div class="sel" style="top:501px"></div>
<div class="ic" style="top:502px"><svg width="16" height="16"><rect x=".5" y="2.5" width="15" height="11" fill="#cbe1f5" stroke="#56718a"/><rect x="1" y="2" width="14" height="2" fill="#56718a"/><rect x="5" y="5" width="6" height="7" fill="#1576d6"/><path d="M2 5.5h2M2 7.5h2M2 9.5h2M2 11.5h2M12 5.5h2M12 7.5h2" stroke="#56718a"/></svg></div>
<div class="t" style="top:502px;transform:scaleX(1.0130);left:43.20px;">aimgr.exe</div>
<div class="t" style="top:502px;transform:scaleX(0.9745);left:174.50px;">C:<i style="width:5.32px">\</i>Program Files<i style="width:5.32px">\</i>Microsoft Office<i style="width:5.32px">\</i>root<i style="width:5.32px">\</i>vfs<i style="width:5.32px">\</i>ProgramFilesCommonX86<i style="width:5.32px">\</i>Microsoft Shared<i style="width:5.32px">\</i>OFFICE16<i style="width:5.32px">\</i></div>
<div class="t" style="top:502px;transform:scaleX(0.8688);right:274.50px;transform-origin:100% 0;">107 KB</div>
<div class="t" style="top:502px;transform:scaleX(1.0391);left:801.40px;">Application</div>
<div class="t" style="top:502px;transform:scaleX(0.9729);left:906.30px;">3/8/2024 11:15:48 AM</div>
<div class="sel" style="top:520px"></div>
<div class="ic" style="top:521px"><svg width="16" height="16"><path d="M2.5 .5h8l3 3v12h-11z" fill="#cbe1f5" stroke="#56718a"/><path d="M10.5 .5v3h3" fill="none" stroke="#56718a"/><circle cx="6" cy="6.5" r="2" fill="none" stroke="#8aa3b8" stroke-width="1.6"/><circle cx="9.5" cy="10.5" r="1.5" fill="none" stroke="#56718a" stroke-width="1.4"/></svg></div>
<div class="t" style="top:521px;transform:scaleX(1.0461);left:43.20px;">aitrx.dll</div>
<div class="t" style="top:521px;transform:scaleX(0.9745);left:174.50px;">C:<i style="width:5.32px">\</i>Program Files<i style="width:5.32px">\</i>Microsoft Office<i style="width:5.32px">\</i>root<i style="width:5.32px">\</i>vfs<i style="width:5.32px">\</i>ProgramFilesCommonX86<i style="width:5.32px">\</i>Microsoft Shared<i style="width:5.32px">\</i>OFFICE16<i style="width:5.32px">\</i></div>
<div class="t" style="top:521px;transform:scaleX(0.8688);right:274.50px;transform-origin:100% 0;">798 KB</div>
<div class="t" style="top:521px;transform:scaleX(1.0235);left:801.40px;">Application ext...</div>
<div class="t" style="top:521px;transform:scaleX(0.9729);left:906.30px;">3/8/2024 11:15:48 AM</div>
<div class="ic" style="top:540px"><svg width="16" height="16"><path d="M2.5 .5h8l3 3v12h-11z" fill="#fafafa" stroke="#6e6e6e"/><path d="M10.5 .5v3h3" fill="none" stroke="#6e6e6e"/></svg></div>
<div class="t" style="top:540px;transform:scaleX(1.0360);left:43.20px;">aif.xml</div>
<div class="t" style="top:540px;transform:scaleX(0.9862);left:174.50px;">C:<i style="width:5.26px">\</i>Program Files<i style="width:5.26px">\</i>Mythicsoft<i style="width:5.26px">\</i>Agent Ransack<i style="width:5.26px">\</i>plugin_cfg<i style="width:5.26px">\</i></div>
<div class="t" style="top:540px;transform:scaleX(0.8456);right:274.50px;transform-origin:100% 0;">1 KB</div>
<div class="t" style="top:540px;transform:scaleX(1.0717);left:801.40px;">xmlfile</div>
<div class="t" style="top:540px;transform:scaleX(0.9522);left:906.30px;">8/18/2020 4:39:14 PM</div>
<div class="ic" style="top:559px"><svg width="16" height="16"><rect x="1.5" y="2.5" width="13" height="11" fill="#8fd6ef" stroke="#505050"/><path d="M2 11l4-5 4 4 2-2 2 2v3H2z" fill="#e7b319"/><path d="M8 8c1-2 4-2 6-1v3z" fill="#6f9a35"/><rect x="2" y="11" width="12" height="2" fill="#3c90d8"/><rect x="2" y="11" width="3" height="2" fill="#6bc23d"/></svg></div>
<div class="t" style="top:559px;transform:scaleX(0.9854);left:43.20px;">aim_lab_poster.jpg</div>
<div class="t" style="top:559px;transform:scaleX(0.9642);left:174.50px;">C:<i style="width:5.38px">\</i>ProgramData<i style="width:5.38px">\</i>LGHUB<i style="width:5.38px">\</i>depots<i style="width:5.38px">\</i>262963<i style="width:5.38px">\</i>core<i style="width:5.38px">\</i>applications<i style="width:5.38px">\</i></div>
<div class="t" style="top:559px;transform:scaleX(0.8596);right:274.50px;transform-origin:100% 0;">23 KB</div>
<div class="t" style="top:559px;transform:scaleX(0.8925);left:801.40px;">JPG File</div>
<div class="t" style="top:559px;transform:scaleX(0.9726);left:906.30px;">3/8/2024 7:24:57 AM</div>
<div class="ic" style="top:578px"><svg width="16" height="16"><rect x="1.5" y="2.5" width="13" height="11" fill="#8fd6ef" stroke="#505050"/><path d="M2 11l4-5 4 4 2-2 2 2v3H2z" fill="#e7b319"/><path d="M8 8c1-2 4-2 6-1v3z" fill="#6f9a35"/><rect x="2" y="11" width="12" height="2" fill="#3c90d8"/><rect x="2" y="11" width="3" height="2" fill="#6bc23d"/></svg></div>
<div class="t" style="top:578px;transform:scaleX(0.9976);left:43.20px;">aion_poster.jpg</div>
<div class="t" style="top:578px;transform:scaleX(0.9642);left:174.50px;">C:<i style="width:5.38px">\</i>ProgramData<i style="width:5.38px">\</i>LGHUB<i style="width:5.38px">\</i>depots<i style="width:5.38px">\</i>262963<i style="width:5.38px">\</i>core<i style="width:5.38px">\</i>applications<i style="width:5.38px">\</i></div>
<div class="t" style="top:578px;transform:scaleX(0.8596);right:274.50px;transform-origin:100% 0;">85 KB</div>
<div class="t" style="top:578px;transform:scaleX(0.8925);left:801.40px;">JPG File</div>
<div class="t" style="top:578px;transform:scaleX(0.9726);left:906.30px;">3/8/2024 7:24:57 AM</div>
<div class="ic" style="top:597px"><svg width="16" height="16"><rect x="1.5" y="2.5" width="13" height="11" fill="#8fd6ef" stroke="#505050"/><path d="M2 11l4-5 4 4 2-2 2 2v3H2z" fill="#e7b319"/><path d="M8 8c1-2 4-2 6-1v3z" fill="#6f9a35"/><rect x="2" y="11" width="12" height="2" fill="#3c90d8"/><rect x="2" y="11" width="3" height="2" fill="#6bc23d"/></svg></div>
<div class="t" style="top:597px;transform:scaleX(0.9899);left:43.20px;">airborne_kingdom_p...</div>
<div class="t" style="top:597px;transform:scaleX(0.9642);left:174.50px;">C:<i style="width:5.38px">\</i>ProgramData<i style="width:5.38px">\</i>LGHUB<i style="width:5.38px">\</i>depots<i style="width:5.38px">\</i>262963<i style="width:5.38px">\</i>core<i style="width:5.38px">\</i>applications<i style="width:5.38px">\</i></div>
<div class="t" style="top:597px;transform:scaleX(0.8688);right:274.50px;transform-origin:100% 0;">163 KB</div>
<div class="t" style="top:597px;transform:scaleX(0.8925);left:801.40px;">JPG File</div>
<div class="t" style="top:597px;transform:scaleX(0.9726);left:906.30px;">3/8/2024 7:24:57 AM</div>
<div class="ic" style="top:616px"><svg width="16" height="16"><path d="M4 1h8l2 2.5-.8 2.2L14 9l-3 5-3 1.5L5 14 2 9l.8-3.3L2 3.5z" fill="#f2441c"/><path d="M5.5 5h5l-1 3h-3zM6.5 9.5h3l-1.5 2z" fill="#fff" opacity=".9"/></svg></div>
<div class="t" style="top:616px;transform:scaleX(1.0561);left:43.20px;">air-zoom.html</div>
<div class="t" style="top:616px;transform:scaleX(0.9618);left:174.50px;">C:<i style="width:5.39px">\</i>ProgramData<i style="width:5.39px">\</i>Logishrd<i style="width:5.39px">\</i>SetPointP<i style="width:5.39px">\</i>Devices<i style="width:5.39px">\</i>PointingDevice<i style="width:5.39px">\</i>100006C<i style="width:5.39px">\</i></div>
<div class="t" style="top:616px;transform:scaleX(0.8456);right:274.50px;transform-origin:100% 0;">1 KB</div>
<div class="t" style="top:616px;transform:scaleX(0.9667);left:801.40px;">Brave HTML Do...</div>
<div class="t" style="top:616px;transform:scaleX(0.9726);left:906.30px;">1/3/2023 2:10:34 AM</div>
<div class="ic" style="top:635px"><svg width="16" height="16"><path d="M2.5 .5h8l3 3v12h-11z" fill="#fafafa" stroke="#6e6e6e"/><path d="M10.5 .5v3h3" fill="none" stroke="#6e6e6e"/></svg></div>
<div class="t" style="top:635px;transform:scaleX(0.9716);left:43.20px;">AirSpace.Etw.man</div>
<div class="t" style="top:635px;transform:scaleX(0.9476);left:174.50px;">C:<i style="width:5.47px">\</i>ProgramData<i style="width:5.47px">\</i>Microsoft<i style="width:5.47px">\</i>ClickToRun<i style="width:5.47px">\</i>{9AC08E99-230B-47e8-9721-4577B7F124EA}<i style="width:5.47px">\</i></div>
<div class="t" style="top:635px;transform:scaleX(0.8688);right:274.50px;transform-origin:100% 0;">422 KB</div>
<div class="t" style="top:635px;transform:scaleX(1.0147);left:801.40px;">MAN File</div>
<div class="t" style="top:635px;transform:scaleX(0.9522);left:906.30px;">9/17/2023 8:49:22 PM</div>
<div class="ic" style="top:654px"><svg width="16" height="16"><rect x="1.5" y="2.5" width="13" height="11" fill="#8fd6ef" stroke="#505050"/><path d="M2 11l4-5 4 4 2-2 2 2v3H2z" fill="#e7b319"/><path d="M8 8c1-2 4-2 6-1v3z" fill="#6f9a35"/><rect x="2" y="11" width="12" height="2" fill="#3c90d8"/><rect x="2" y="11" width="3" height="2" fill="#6bc23d"/></svg></div>
<div class="t" style="top:654px;transform:scaleX(0.9914);left:43.20px;">AirSwapLogo.png</div>
<div class="t" style="top:654px;transform:scaleX(0.9485);left:174.50px;">C:<i style="width:5.47px">\</i>Users<i style="width:5.47px">\</i>Mike<i style="width:5.47px">\</i>AppData<i style="width:5.47px">\</i>Local<i style="width:5.47px">\</i>BraveSoftware<i style="width:5.47px">\</i>Brave-Browser<i style="width:5.47px">\</i>User Data<i style="width:5.47px">\</i>BraveWallet<i style="width:5.47px">\</i>1.0.90<i style="width:5.47px">\</i>images<i style="width:5.47px">\</i></div>
<div class="t" style="top:654px;transform:scaleX(0.8456);right:274.50px;transform-origin:100% 0;">2 KB</div>
<div class="t" style="top:654px;transform:scaleX(0.9348);left:801.40px;">PNG File</div>
<div class="t" style="top:654px;transform:scaleX(0.9522);left:906.30px;">1/21/2024 4:50:26 PM</div>
<div class="ic" style="top:673px"><svg width="16" height="16"><rect x="8.5" y="3.5" width="5" height="11" rx="1" fill="none" stroke="#2f97df" stroke-width="1.2"/><rect x="1.5" y="7" width="5" height="3" fill="#2f97df"/><path d="M3 10v3h4" fill="none" stroke="#2f97df"/></svg></div>
<div class="t" style="top:673px;transform:scaleX(1.0014);left:43.20px;">AioRemote.ico</div>
<div class="t" style="top:673px;transform:scaleX(0.9584);left:174.50px;">C:<i style="width:5.41px">\</i>Users<i style="width:5.41px">\</i>Mike<i style="width:5.41px">\</i>AppData<i style="width:5.41px">\</i>Local<i style="width:5.41px">\</i>Microsoft<i style="width:5.41px">\</i>Device Stage<i style="width:5.41px">\</i>Task<i style="width:5.41px">\</i>{d3c805e1-898b-4d24-8853-e338...<i style="width:5.41px">\</i>tr<i style="width:5.41px">\</i></div>
<div class="t" style="top:673px;transform:scaleX(0.8596);right:274.50px;transform-origin:100% 0;">35 KB</div>
<div class="t" style="top:673px;transform:scaleX(0.9495);left:801.40px;">ICO File</div>
<div class="t" style="top:673px;transform:scaleX(0.9511);left:906.30px;">11/29/2023 3:41:37 PM</div>
<div class="ic" style="top:692px"><svg width="16" height="16"><path d="M2.5 .5h8l3 3v12h-11z" fill="#fafafa" stroke="#6e6e6e"/><path d="M10.5 .5v3h3" fill="none" stroke="#6e6e6e"/></svg></div>
<div class="t" style="top:692px;transform:scaleX(0.9993);left:43.20px;">Airbnb-2023-11-26-0...</div>
<div class="t" style="top:692px;transform:scaleX(0.9640);left:174.50px;">C:<i style="width:5.38px">\</i>Users<i style="width:5.38px">\</i>Mike<i style="width:5.38px">\</i>AppData<i style="width:5.38px">\</i>Local<i style="width:5.38px">\</i>Packages<i style="width:5.38px">\</i>AppleInc.iTunes_nzyj5cx40ttqa<i style="width:5.38px">\</i>LocalCa...<i style="width:5.38px">\</i>iPhone oMike<i style="width:5.38px">\</i></div>
<div class="t" style="top:692px;transform:scaleX(0.8596);right:274.50px;transform-origin:100% 0;">42 KB</div>
<div class="t" style="top:692px;transform:scaleX(0.8993);left:801.40px;">IPS File</div>
<div class="t" style="top:692px;transform:scaleX(0.9511);left:906.30px;">11/26/2023 8:42:56 PM</div>
<div class="ic" style="top:711px"><svg width="16" height="16"><path d="M2.5 .5h8l3 3v12h-11z" fill="#fafafa" stroke="#6e6e6e"/><path d="M10.5 .5v3h3" fill="none" stroke="#6e6e6e"/></svg></div>
<div class="t" style="top:711px;transform:scaleX(0.9919);left:43.20px;">Airbnb-2024-02-27-1...</div>
<div class="t" style="top:711px;transform:scaleX(0.9640);left:174.50px;">C:<i style="width:5.38px">\</i>Users<i style="width:5.38px">\</i>Mike<i style="width:5.38px">\</i>AppData<i style="width:5.38px">\</i>Local<i style="width:5.38px">\</i>Packages<i style="width:5.38px">\</i>AppleInc.iTunes_nzyj5cx40ttqa<i style="width:5.38px">\</i>LocalCa...<i style="width:5.38px">\</i>iPhone oMike<i style="width:5.38px">\</i></div>
<div class="t" style="top:711px;transform:scaleX(0.8596);right:274.50px;transform-origin:100% 0;">49 KB</div>
<div class="t" style="top:711px;transform:scaleX(0.8993);left:801.40px;">IPS File</div>
<div class="t" style="top:711px;transform:scaleX(0.9598);left:906.30px;">3/6/2024 8:55:43 PM</div>
<div class="ic" style="top:730px"><svg width="16" height="16"><path d="M4.5 .5h7l3 3v12h-10z" fill="#fafafa" stroke="#6e6e6e"/><path d="M6 3.5h5M6 5.5h7M6 7.5h7M9 9.5h4M9 11.5h4M9 13.5h4" stroke="#9a9a9a"/><rect x="1" y="9" width="7" height="7" fill="#e3ebf5"/><path d="M2.8 14.2L6 11M3.8 10.5h2.7v2.7" stroke="#1b86e0" stroke-width="1.6" fill="none"/></svg></div>
<div class="t" style="top:730px;transform:scaleX(1.0292);left:43.20px;">AI.txt.lnk</div>
<div class="t" style="top:730px;transform:scaleX(0.9824);left:174.50px;">C:<i style="width:5.28px">\</i>Users<i style="width:5.28px">\</i>Mike<i style="width:5.28px">\</i>AppData<i style="width:5.28px">\</i>Roaming<i style="width:5.28px">\</i>Microsoft<i style="width:5.28px">\</i>Windows<i style="width:5.28px">\</i>Recent<i style="width:5.28px">\</i></div>
<div class="t" style="top:730px;transform:scaleX(0.8456);right:274.50px;transform-origin:100% 0;">1 KB</div>
<div class="t" style="top:730px;transform:scaleX(0.9980);left:801.40px;">Shortcut</div>
<div class="t" style="top:730px;transform:scaleX(0.9522);left:906.30px;">3/24/2024 7:25:26 PM</div>
<div class="ic" style="top:749px"><svg width="16" height="16"><rect x=".5" y="2.5" width="15" height="11" fill="#f8f8f8" stroke="#6e6e6e"/><rect x="1" y="2" width="14" height="2" fill="#6e6e6e"/><rect x="5" y="5" width="6" height="7" fill="#1576d6"/><path d="M2 5.5h2M2 7.5h2M2 9.5h2M2 11.5h2M12 5.5h2M12 7.5h2" stroke="#6e6e6e"/></svg></div>
<div class="t" style="top:749px;transform:scaleX(0.9735);left:43.20px;">airhost.exe</div>
<div class="t" style="top:749px;transform:scaleX(0.9837);left:174.50px;">C:<i style="width:5.27px">\</i>Users<i style="width:5.27px">\</i>Mike<i style="width:5.27px">\</i>AppData<i style="width:5.27px">\</i>Roaming<i style="width:5.27px">\</i>Zoom<i style="width:5.27px">\</i>bin<i style="width:5.27px">\</i></div>
<div class="t" style="top:749px;transform:scaleX(0.8779);right:274.50px;transform-origin:100% 0;">16,702 KB</div>
<div class="t" style="top:749px;transform:scaleX(1.0391);left:801.40px;">Application</div>
<div class="t" style="top:749px;transform:scaleX(0.9655);left:906.30px;">3/6/2024 10:14:59 AM</div>
<div class="ic" style="top:768px"><svg width="16" height="16"><path d="M2.5 .5h8l3 3v12h-11z" fill="#fafafa" stroke="#6e6e6e"/><path d="M10.5 .5v3h3" fill="none" stroke="#6e6e6e"/></svg></div>
<div class="t" style="top:768px;transform:scaleX(1.0083);left:43.20px;">Airline Food.tfx</div>
<div class="t" style="top:768px;transform:scaleX(0.9456);left:174.50px;">C:<i style="width:5.48px">\</i>Users<i style="width:5.48px">\</i>Mike<i style="width:5.48px">\</i>Dropbox<i style="width:5.48px">\</i>Casual Saints™ Platform<i style="width:5.48px">\</i>CS - Theme Music - STUDIO FILE...<i style="width:5.48px">\</i>Mastererizer<i style="width:5.48px">\</i></div>
<div class="t" style="top:768px;transform:scaleX(0.8456);right:274.50px;transform-origin:100% 0;">1 KB</div>
<div class="t" style="top:768px;transform:scaleX(0.9057);left:801.40px;">TFX File</div>
<div class="t" style="top:768px;transform:scaleX(0.9598);left:906.30px;">1/7/2017 2:08:03 PM</div>
<div class="ic" style="top:787px"><svg width="16" height="16"><rect x="5.6" y=".6" width="10" height="11.4" rx="2" fill="#dceafa" stroke="#2a6ad0" stroke-width="1.2"/><rect x="8" y="13.2" width="8" height="2.4" fill="#2a70d8"/><path d="M10.5 12v1.5" stroke="#2a6ad0"/><rect x="3.7" y="3.7" width="8.4" height="5.8" fill="#f6e8a8" stroke="#0a10e8" stroke-width="1.4"/><path d="M8 2.3h1.2M10 2.3h1.2" stroke="#e0402a" stroke-width="1.2"/><path d="M0 4.5h3.5M.5 6.5h3M0 8.5h3.5" stroke="#1a30f0"/></svg></div>
<div class="t" style="top:787px;transform:scaleX(0.9368);left:43.20px;">aic78xx_aic78u2_vista...</div>
<div class="t" style="top:787px;transform:scaleX(0.9655);left:174.50px;">C:<i style="width:5.37px">\</i>Users<i style="width:5.37px">\</i>Mike<i style="width:5.37px">\</i>Dropbox<i style="width:5.37px">\</i>downloads and setups<i style="width:5.37px">\</i>Iomega Jaz Drive<i style="width:5.37px">\</i></div>
<div class="t" style="top:787px;transform:scaleX(0.8688);right:274.50px;transform-origin:100% 0;">138 KB</div>
<div class="t" style="top:787px;transform:scaleX(1.0391);left:801.40px;">Application</div>
<div class="t" style="top:787px;transform:scaleX(0.9444);left:906.30px;">12/29/2022 9:49:38 PM</div>
<div class="ic" style="top:806px"><svg width="16" height="16"><rect x="1.5" y="2.5" width="13" height="11" fill="#8fd6ef" stroke="#505050"/><path d="M2 11l4-5 4 4 2-2 2 2v3H2z" fill="#e7b319"/><path d="M8 8c1-2 4-2 6-1v3z" fill="#6f9a35"/><rect x="2" y="11" width="12" height="2" fill="#3c90d8"/><rect x="2" y="11" width="3" height="2" fill="#6bc23d"/></svg></div>
<div class="t" style="top:806px;transform:scaleX(1.0011);left:43.20px;">Aidan Johnston.png</div>
<div class="t" style="top:806px;transform:scaleX(0.9589);left:174.50px;">C:<i style="width:5.41px">\</i>Users<i style="width:5.41px">\</i>Mike<i style="width:5.41px">\</i>Dropbox<i style="width:5.41px">\</i>Soul Rider<i style="width:5.41px">\</i>z - old<i style="width:5.41px">\</i>Families &amp; Veterans Super PAC<i style="width:5.41px">\</i></div>
<div class="t" style="top:806px;transform:scaleX(0.8688);right:274.50px;transform-origin:100% 0;">537 KB</div>
<div class="t" style="top:806px;transform:scaleX(0.9348);left:801.40px;">PNG File</div>
<div class="t" style="top:806px;transform:scaleX(0.9655);left:906.30px;">6/30/2022 8:26:46 AM</div>
<div class="ic" style="top:825px"><svg width="16" height="16"><defs><linearGradient id="gipa" x1="0" y1="0" x2="1" y2="1"><stop offset="0" stop-color="#f2506a"/><stop offset=".5" stop-color="#b060d8"/><stop offset="1" stop-color="#3a8af0"/></linearGradient></defs><path d="M2.5 .5H10L13.5 4V15.5H2.5Z" fill="#f6f6f6" stroke="#9a9a9a"/><path d="M10 .5V4H13.5Z" fill="#fff" stroke="#b0b0b0"/><circle cx="7.9" cy="9.2" r="3.6" fill="#fff" stroke="url(#gipa)" stroke-width="1.8"/><path d="M7 10.8V8l2.2-.6v2.8" fill="none" stroke="#4a6ae0" stroke-width=".9"/></svg></div>
<div class="t" style="top:825px;transform:scaleX(0.9646);left:43.20px;">Airbnb 18.33.ipa</div>
<div class="t" style="top:825px;transform:scaleX(0.9845);left:174.50px;">C:<i style="width:5.27px">\</i>Users<i style="width:5.27px">\</i>Mike<i style="width:5.27px">\</i>Music<i style="width:5.27px">\</i>iTunes<i style="width:5.27px">\</i>iTunes Media<i style="width:5.27px">\</i>Mobile Applications<i style="width:5.27px">\</i></div>
<div class="t" style="top:825px;transform:scaleX(0.8944);right:274.50px;transform-origin:100% 0;">211,355 KB</div>
<div class="t" style="top:825px;transform:scaleX(0.9862);left:801.40px;">Apple Device A...</div>
<div class="t" style="top:825px;transform:scaleX(0.9655);left:906.30px;">8/16/2018 8:09:04 AM</div>
<div class="sel" style="top:843px"></div>
<div class="ic" style="top:844px"><svg width="16" height="16"><rect x=".5" y="2.5" width="15" height="11" fill="#cbe1f5" stroke="#56718a"/><rect x="1" y="2" width="14" height="2" fill="#56718a"/><circle cx="7" cy="8" r="1.8" fill="none" stroke="#8aa3b8" stroke-width="1.5"/><circle cx="10" cy="11.5" r="1.3" fill="none" stroke="#56718a" stroke-width="1.3"/></svg></div>
<div class="t" style="top:844px;transform:scaleX(0.9753);left:43.20px;">AI.bat</div>
<div class="t" style="top:844px;transform:scaleX(0.9658);left:174.50px;">C:<i style="width:5.37px">\</i>Users<i style="width:5.37px">\</i>Mike<i style="width:5.37px">\</i>OneDrive<i style="width:5.37px">\</i>Desktop<i style="width:5.37px">\</i>Desktop<i style="width:5.37px">\</i>No AI<i style="width:5.37px">\</i></div>
<div class="t" style="top:844px;transform:scaleX(0.8456);right:274.50px;transform-origin:100% 0;">1 KB</div>
<div class="t" style="top:844px;transform:scaleX(0.9967);left:801.40px;">Windows Batch...</div>
<div class="t" style="top:844px;transform:scaleX(0.9522);left:906.30px;">3/24/2024 6:58:14 PM</div>
<div class="sel" style="top:862px"></div>
<div class="ic" style="top:863px"><svg width="16" height="16"><path d="M2.5 .5h8l3 3v12h-11z" fill="#cbe1f5" stroke="#56718a"/><path d="M10.5 .5v3h3" fill="none" stroke="#56718a"/><path d="M4 4.5h5M4 6.5h7M4 8.5h7M4 10.5h7M4 12.5h7" stroke="#56718a"/></svg></div>
<div class="t" style="top:863px;transform:scaleX(1.0065);left:43.20px;">AI.txt</div>
<div class="t" style="top:863px;transform:scaleX(0.9658);left:174.50px;">C:<i style="width:5.37px">\</i>Users<i style="width:5.37px">\</i>Mike<i style="width:5.37px">\</i>OneDrive<i style="width:5.37px">\</i>Desktop<i style="width:5.37px">\</i>Desktop<i style="width:5.37px">\</i>No AI<i style="width:5.37px">\</i></div>
<div class="t" style="top:863px;transform:scaleX(0.8456);right:274.50px;transform-origin:100% 0;">1 KB</div>
<div class="t" style="top:863px;transform:scaleX(0.9981);left:801.40px;">Text Document</div>
<div class="t" style="top:863px;transform:scaleX(0.9522);left:906.30px;">3/24/2024 6:58:31 PM</div>
<div class="sel" style="top:881px"></div>
<div class="ic" style="top:882px"><svg width="16" height="16"><path d="M2.5 .5h8l3 3v12h-11z" fill="#cbe1f5" stroke="#56718a"/><path d="M10.5 .5v3h3" fill="none" stroke="#56718a"/><circle cx="8" cy="9.5" r="3.2" fill="#1f2f40" stroke="#d06a30" stroke-width="1"/><path d="M7 8v3l2.4-1.5z" fill="#fff"/></svg></div>
<div class="t" style="top:882px;transform:scaleX(0.9443);left:43.20px;">alzl8kTxGj.mp4</div>
<div class="t" style="top:882px;transform:scaleX(0.9475);left:174.50px;">C:<i style="width:5.47px">\</i>Users<i style="width:5.47px">\</i>Mike<i style="width:5.47px">\</i>OneDrive<i style="width:5.47px">\</i>Documents<i style="width:5.47px">\</i>ShareX<i style="width:5.47px">\</i>Screenshots<i style="width:5.47px">\</i>2023-10<i style="width:5.47px">\</i></div>
<div class="t" style="top:882px;transform:scaleX(0.8730);right:274.50px;transform-origin:100% 0;">6,132 KB</div>
<div class="t" style="top:882px;transform:scaleX(0.9611);left:801.40px;">MP4 File</div>
<div class="t" style="top:882px;transform:scaleX(0.9444);left:906.30px;">10/23/2023 4:49:26 PM</div>
<div class="sel" style="top:900px"></div>
<div class="ic" style="top:901px"><svg width="16" height="16"><path d="M2.5 .5h8l3 3v12h-11z" fill="#cbe1f5" stroke="#56718a"/><path d="M10.5 .5v3h3" fill="none" stroke="#56718a"/></svg></div>
<div class="t" style="top:901px;transform:scaleX(0.9357);left:43.20px;">ai031033.am</div>
<div class="t" style="top:901px;transform:scaleX(0.9356);left:174.50px;">C:<i style="width:5.54px">\</i>Windows<i style="width:5.54px">\</i>Speech<i style="width:5.54px">\</i>Engines<i style="width:5.54px">\</i>SR<i style="width:5.54px">\</i>en-US<i style="width:5.54px">\</i></div>
<div class="t" style="top:901px;transform:scaleX(0.8730);right:274.50px;transform-origin:100% 0;">6,132 KB</div>
<div class="t" style="top:901px;transform:scaleX(1.0096);left:801.40px;">AM File</div>
<div class="t" style="top:901px;transform:scaleX(0.9726);left:906.30px;">5/6/2022 6:04:00 AM</div>
<div class="sel" style="top:919px"></div>
<div class="ic" style="top:920px"><svg width="16" height="16"><path d="M2.5 .5h8l3 3v12h-11z" fill="#cbe1f5" stroke="#56718a"/><path d="M10.5 .5v3h3" fill="none" stroke="#56718a"/></svg></div>
<div class="t" style="top:920px;transform:scaleX(0.9414);left:43.20px;">AI041033.am</div>
<div class="t" style="top:920px;transform:scaleX(0.9445);left:174.50px;">C:<i style="width:5.49px">\</i>Windows<i style="width:5.49px">\</i>Speech_OneCore<i style="width:5.49px">\</i>Engines<i style="width:5.49px">\</i>SR<i style="width:5.49px">\</i>en-US-N<i style="width:5.49px">\</i></div>
<div class="t" style="top:920px;transform:scaleX(0.8730);right:274.50px;transform-origin:100% 0;">4,699 KB</div>
<div class="t" style="top:920px;transform:scaleX(1.0096);left:801.40px;">AM File</div>
<div class="t" style="top:920px;transform:scaleX(0.9726);left:906.30px;">5/6/2022 6:09:00 AM</div>
<div class="sel" style="top:938px"></div>
<div class="ic" style="top:939px"><svg width="16" height="16"><rect x=".5" y="2.5" width="15" height="11" fill="#cbe1f5" stroke="#56718a"/><rect x="1" y="2" width="14" height="2" fill="#56718a"/><rect x="5" y="5" width="6" height="7" fill="#1576d6"/><path d="M2 5.5h2M2 7.5h2M2 9.5h2M2 11.5h2M12 5.5h2M12 7.5h2" stroke="#56718a"/></svg></div>
<div class="t" style="top:939px;transform:scaleX(0.9895);left:43.20px;">aitstatic.exe</div>
<div class="t" style="top:939px;transform:scaleX(0.9636);left:174.50px;">C:<i style="width:5.38px">\</i>Windows<i style="width:5.38px">\</i>System32<i style="width:5.38px">\</i></div>
<div class="t" style="top:939px;transform:scaleX(0.8730);right:274.50px;transform-origin:100% 0;">3,174 KB</div>
<div class="t" style="top:939px;transform:scaleX(1.0391);left:801.40px;">Application</div>
<div class="t" style="top:939px;transform:scaleX(0.9506);left:906.30px;">11/14/2023 10:18:20 PM</div>
<div class="sel" style="top:957px"></div>
<div class="ic" style="top:958px"><svg width="16" height="16"><rect x=".5" y="2.5" width="15" height="11" fill="#cbe1f5" stroke="#56718a"/><rect x="1" y="2" width="14" height="2" fill="#56718a"/><rect x="5" y="5" width="6" height="7" fill="#1576d6"/><path d="M2 5.5h2M2 7.5h2M2 9.5h2M2 11.5h2M12 5.5h2M12 7.5h2" stroke="#56718a"/></svg></div>
<div class="t" style="top:958px;transform:scaleX(0.9895);left:43.20px;">aitstatic.exe</div>
<div class="t" style="top:958px;transform:scaleX(0.9499);left:174.50px;">...icrosoft-windows-a..perience-ait-static_31bf3856ad364e35_10.0.22621.2506_none_10befca029e48660</div>
<div class="t" style="top:958px;transform:scaleX(0.8730);right:274.50px;transform-origin:100% 0;">3,174 KB</div>
<div class="t" style="top:958px;transform:scaleX(1.0391);left:801.40px;">Application</div>
<div class="t" style="top:958px;transform:scaleX(0.9506);left:906.30px;">11/14/2023 10:18:20 PM</div>
<div class="sel" style="top:976px"></div>
<div class="ic" style="top:977px"><svg width="16" height="16"><rect x=".5" y="2.5" width="15" height="11" fill="#cbe1f5" stroke="#56718a"/><rect x="1" y="2" width="14" height="2" fill="#56718a"/><rect x="5" y="5" width="6" height="7" fill="#1576d6"/><path d="M2 5.5h2M2 7.5h2M2 9.5h2M2 11.5h2M12 5.5h2M12 7.5h2" stroke="#56718a"/></svg></div>
<div class="t" style="top:977px;transform:scaleX(0.9895);left:43.20px;">aitstatic.exe</div>
<div class="t" style="top:977px;transform:scaleX(0.9687);left:174.50px;">C:<i style="width:5.35px">\</i>Windows<i style="width:5.35px">\</i>WinSxS<i style="width:5.35px">\</i>amd64_microsoft-windows-a..perience-ait-static_31bf3856ad364e35_10....<i style="width:5.35px">\</i>f<i style="width:5.35px">\</i></div>
<div class="t" style="top:977px;transform:scaleX(0.8456);right:274.50px;transform-origin:100% 0;">4 KB</div>
<div class="t" style="top:977px;transform:scaleX(1.0391);left:801.40px;">Application</div>
<div class="t" style="top:977px;transform:scaleX(0.9729);left:906.30px;">11/9/2023 4:04:23 AM</div>
<div class="sel" style="top:995px"></div>
<div class="ic" style="top:996px"><svg width="16" height="16"><rect x=".5" y="2.5" width="15" height="11" fill="#cbe1f5" stroke="#56718a"/><rect x="1" y="2" width="14" height="2" fill="#56718a"/><rect x="5" y="5" width="6" height="7" fill="#1576d6"/><path d="M2 5.5h2M2 7.5h2M2 9.5h2M2 11.5h2M12 5.5h2M12 7.5h2" stroke="#56718a"/></svg></div>
<div class="t" style="top:996px;transform:scaleX(0.9895);left:43.20px;">aitstatic.exe</div>
<div class="t" style="top:996px;transform:scaleX(0.9674);left:174.50px;">C:<i style="width:5.36px">\</i>Windows<i style="width:5.36px">\</i>WinSxS<i style="width:5.36px">\</i>amd64_microsoft-windows-a..perience-ait-static_31bf3856ad364e35_10....<i style="width:5.36px">\</i>r<i style="width:5.36px">\</i></div>
<div class="t" style="top:996px;transform:scaleX(0.8456);right:274.50px;transform-origin:100% 0;">6 KB</div>
<div class="t" style="top:996px;transform:scaleX(1.0391);left:801.40px;">Application</div>
<div class="t" style="top:996px;transform:scaleX(0.9506);left:906.30px;">11/14/2023 10:18:20 PM</div>
<div class="sel" style="top:1014px"></div>
<div class="ic" style="top:1015px"><svg width="16" height="16"><path d="M2.5 .5h8l3 3v12h-11z" fill="#cbe1f5" stroke="#56718a"/><path d="M10.5 .5v3h3" fill="none" stroke="#56718a"/></svg></div>
<div class="t" style="top:1015px;transform:scaleX(0.9414);left:43.20px;">AI041033.am</div>
<div class="t" style="top:1015px;transform:scaleX(0.9485);left:174.50px;">...icrosoft-windows-s..zer-en-us-n-onecore_31bf3856ad364e35_10.0.22621.1_none_17acc34423815479</div>
<div class="t" style="top:1015px;transform:scaleX(0.8730);right:274.50px;transform-origin:100% 0;">4,699 KB</div>
<div class="t" style="top:1015px;transform:scaleX(1.0096);left:801.40px;">AM File</div>
<div class="t" style="top:1015px;transform:scaleX(0.9726);left:906.30px;">5/6/2022 6:09:00 AM</div>
<div class="sel" style="top:1033px"></div>
<div class="ic" style="top:1034px"><svg width="16" height="16"><path d="M2.5 .5h8l3 3v12h-11z" fill="#cbe1f5" stroke="#56718a"/><path d="M10.5 .5v3h3" fill="none" stroke="#56718a"/></svg></div>
<div class="t" style="top:1034px;transform:scaleX(0.9357);left:43.20px;">ai031033.am</div>
<div class="t" style="top:1034px;transform:scaleX(0.9518);left:174.50px;">...icrosoft-windows-speechrecognizer-en-us_31bf3856ad364e35_10.0.22621.1_none_18a49588e02adcfc</div>
<div class="t" style="top:1034px;transform:scaleX(0.8730);right:274.50px;transform-origin:100% 0;">6,132 KB</div>
<div class="t" style="top:1034px;transform:scaleX(1.0096);left:801.40px;">AM File</div>
<div class="t" style="top:1034px;transform:scaleX(0.9726);left:906.30px;">5/6/2022 6:04:00 AM</div>
<div class="a" style="left:4px;top:1137px;width:1051px;height:17px;background:#f0f0f0"></div>
<div class="a" style="left:22px;top:1144px;width:763px;height:2px;background:#858585"></div>
<div class="hl" style="left:0;top:1157px;width:1064px;background:#b4b4b4"></div>
<div class="hl" style="left:0;top:1178px;width:1064px;background:#fafafa"></div>
<div class="t" style="top:1161px;transform:scaleX(0.9426);left:4.00px;">Selected 20 items (77.90 MB)</div>
<div class="t" style="top:1161px;transform:scaleX(0.9562);left:491.80px;">Found: 40 items (302.16 MB)</div>
<div class="t" style="top:1161px;transform:scaleX(0.9454);left:669.80px;">Selected: 20 items (77.90 MB)</div>
<div class="t" style="top:1161px;transform:scaleX(0.9371);left:857.70px;">Search time: 13 secs</div>
<div class="t" style="top:1161px;transform:scaleX(0.9321);color:#8a8a8a;left:1001.50px;">CAP</div>
<div class="t" style="top:1161px;transform:scaleX(0.7501);left:1030.30px;">NU</div>
<div class="vl" style="left:665px;top:1161px;height:18px;background:#d4d4d4"></div>
<div class="vl" style="left:853px;top:1161px;height:18px;background:#d4d4d4"></div>
<div class="vl" style="left:995px;top:1161px;height:18px;background:#d4d4d4"></div>
<div class="vl" style="left:1026px;top:1161px;height:18px;background:#d4d4d4"></div>
<div class="vl" style="left:1045px;top:1161px;height:18px;background:#d4d4d4"></div>
<div class="a" style="left:1046px;top:1158px;width:18px;height:21px;background:#f0f0f0"></div>
<div class="a" style="left:1059px;top:1169px;width:2px;height:2px;background:#b0b0b0"></div>
<div class="a" style="left:1056px;top:1172px;width:2px;height:2px;background:#b0b0b0"></div>
<div class="a" style="left:1059px;top:1172px;width:2px;height:2px;background:#b0b0b0"></div>
<div class="a" style="left:1053px;top:1175px;width:2px;height:2px;background:#b0b0b0"></div>
<div class="a" style="left:1056px;top:1175px;width:2px;height:2px;background:#b0b0b0"></div>
<div class="a" style="left:1059px;top:1175px;width:2px;height:2px;background:#b0b0b0"></div>
<svg class="a" style="left:-1px;top:-1px" width="1066" height="1181"><path d="M514 189.8L541.5 217.2H531.2L534.8 224.8L526.8 228.9L521.5 220.9L514 228Z" fill="#000"/><path d="M516 194.5L536.3 215H527L531.4 224L527.5 226L522.6 216.2L516 222.5Z" fill="#00f5c0"/></svg>
</div>
</body></html>
